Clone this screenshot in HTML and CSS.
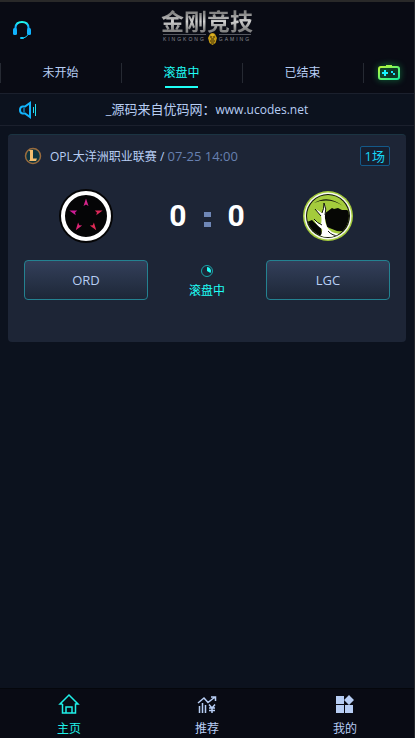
FILE: index.html
```
<!DOCTYPE html>
<html lang="zh-CN">
<head>
<meta charset="utf-8">
<meta name="viewport" content="width=device-width, initial-scale=1">
<title>金刚竞技</title>
<link rel="stylesheet" href="styles.css">
</head>
<body>
<div class="app">
  <header class="header">
    <a class="support" href="#" aria-label="客服">
      <svg width="20" height="20" viewBox="0 0 20 20" fill="none">
        <defs><linearGradient id="g-head" x1="0" y1="0" x2="0" y2="1"><stop offset="0" stop-color="#1ffff0"/><stop offset=".6" stop-color="#10b4ff"/></linearGradient></defs>
        <path d="M3.500 9V7.500Q4 2 10 2T16.500 7.500V9" stroke="url(#g-head)" stroke-width="2"/>
        <rect x="1" y="8" width="4" height="7" rx="1.500" fill="#10b4ff"/>
        <rect x="15" y="8" width="4" height="7" rx="1.500" fill="#10b4ff"/>
        <path d="M16 14.500Q15 17 11.500 18" stroke="#12c8f8"/>
        <rect x="8" y="17" width="4" height="2" rx="1" fill="#12c8f8"/>
      </svg>
    </a>
    <h1 class="logo">
      <span class="logo-name">金刚竞技</span>
      <span class="logo-sub">
        <span class="logo-word">KINGKONG</span>
        <svg width="9" height="12" viewBox="0 0 9 12"><path d="M2 1Q4.500-1 7 1L9 5 7.500 10 4.500 12 1.500 10 0 5Z" fill="#c49a14"/><path d="M2 4h2M5 4h2M3 6h3M2 8h5M3 10h3" stroke="#3b2b08"/><path d="M3 2h3" stroke="#f0c937"/></svg>
        <span class="logo-word">GAMING</span>
      </span>
    </h1>
  </header>

  <nav class="tabs">
    <a class="tab" href="#">未开始</a>
    <a class="tab active" href="#">滚盘中</a>
    <a class="tab" href="#">已结束</a>
    <a class="tab games" href="#" aria-label="游戏">
      <svg width="24" height="18" viewBox="0 0 24 18" fill="none">
        <defs><linearGradient id="g-pad" x1="0" y1="0" x2="1" y2="1"><stop offset="0" stop-color="#b8f83c"/><stop offset="1" stop-color="#16f09c"/></linearGradient></defs>
        <rect x="2" y="3" width="20" height="12" rx="2" stroke="url(#g-pad)" stroke-width="2"/>
        <path d="M9 2h6" stroke="#9cf64a" stroke-width="2"/>
        <path d="M5 9h6M8 6v6" stroke="#18f4ff" stroke-width="2"/>
        <path d="M14 7h2v2h-2zM16 9h2v2h-2z" fill="#18e4f4"/>
      </svg>
    </a>
  </nav>

  <div class="notice">
    <svg width="18" height="18" viewBox="0 0 18 18" fill="none">
      <path d="M12 2v14L7 12.500H4.500Q2 12 2 9T4.500 5.500H7Z" stroke="#12b4fc" stroke-width="2"/>
      <path d="M6 7v4" stroke="#12b4fc"/>
      <path d="M15.500 6v6M17.500 3v12" stroke="#22dff5"/>
    </svg>
    <p class="notice-text">_源码来自优码网：<span class="url">www.ucodes.net</span></p>
  </div>

  <main class="content">
    <article class="match">
      <div class="match-head">
        <svg width="18" height="18" viewBox="0 0 18 18"><circle cx="9" cy="9" r="7.500" fill="#0d3440" stroke="#9a6b3d" stroke-width="1.500"/><path d="M5 3h4v8.500h4l-1 2.500H5l1-1.500V4.500Z" fill="#f2bd70"/></svg>
        <p class="league">OPL大洋洲职业联赛 / <time>07-25 14:00</time></p>
        <span class="badge">1场</span>
      </div>
      <div class="teams">
        <svg class="crest" width="54" height="54" viewBox="0 0 54 54">
          <circle cx="27" cy="27" r="27" fill="#050506"/>
          <circle cx="27" cy="27" r="23" stroke="#fff" stroke-width="4"/>
          <defs><path id="dart" d="M27 9.500L29.500 17 27 15.500 24.500 17Z"/></defs>
          <use href="#dart" fill="#d6248a"/>
          <use href="#dart" fill="#dc2858" transform="rotate(72 27 27)"/>
          <use href="#dart" fill="#e02a55" transform="rotate(144 27 27)"/>
          <use href="#dart" fill="#dc2474" transform="rotate(216 27 27)"/>
          <use href="#dart" fill="#d01c96" transform="rotate(288 27 27)"/>
        </svg>
        <div class="score"><span>0</span><span class="colon"></span><span>0</span></div>
        <svg class="crest" width="54" height="54" viewBox="0 0 54 54">
          <defs><clipPath id="crest-in"><circle cx="27" cy="27" r="21"/></clipPath></defs>
          <circle cx="27" cy="27" r="25" fill="#a4cb3c"/>
          <circle cx="27" cy="27" r="23.500" fill="#f7faee"/>
          <circle cx="27" cy="27" r="22" fill="#10150a"/>
          <g clip-path="url(#crest-in)">
            <path d="M5 5h44v44H5Z" fill="#a4cb3c"/>
            <path d="M13 14Q27 5 42 17Q28 8 13 14Z" fill="#10150a"/>
            <path d="M23 25l4-3 4-3 2 1 4-1 4 2h5l4 3v14Q44 43 36 42L26 38Z" fill="#060705"/>
            <path d="M6 33l5-2 3 3 6 5 1 6-5 5L5 44Z" fill="#060705"/>
            <path d="M17 50Q22 45 21 40Q16 37 13 31Q18 35 20 35Q21 30 20 27L14 20Q18 22 21 24Q23 20 23 14Q26 20 24 26Q23 38 31 43Q39 47 47 42L44 52H17Z" fill="#fff"/>
            <path d="M20 27L14 20M21 24Q23 20 23 14Q26 20 24 26M21 36Q16 34 13 30" fill="none" stroke="#10150a"/>
            <path d="M27 42Q31 47 39 47" fill="none" stroke="#10150a"/>
          </g>
        </svg>
      </div>
      <div class="odds">
        <button class="team" type="button">ORD</button>
        <div class="status">
          <svg width="14" height="14" viewBox="0 0 14 14" fill="none"><circle cx="7" cy="7" r="5.500" stroke="#1aa3a8"/><path d="M7 3a4 4 0 0 1 3.500 6L7 7Z" fill="#1ffff6"/></svg>
          <span>滚盘中</span>
        </div>
        <button class="team" type="button">LGC</button>
      </div>
    </article>
  </main>

  <nav class="bottom">
    <a class="item current" href="#">
      <svg width="22" height="22" viewBox="0 0 22 22" fill="none" stroke="currentColor" stroke-width="1.500"><path d="M4.500 11H2L11 2l9 9h-2.500v9h-13V11M8 20v-6h6v6"/></svg>
      <span>主页</span>
    </a>
    <a class="item" href="#">
      <svg width="22" height="22" viewBox="0 0 22 22" fill="none" stroke="currentColor" stroke-width="1.500"><path d="M2 10l6-5 4 4.500 7-5.500M15 4h4.500v4M3.500 13v7M6.500 10v10M9.500 12v8M13 11.500l3 3.500 3-3.500M16 15v5M13 15h6M13 17.500h6"/></svg>
      <span>推荐</span>
    </a>
    <a class="item" href="#">
      <svg width="22" height="22" viewBox="0 0 22 22" fill="currentColor"><path d="M2 3h8v8H2zM2 12h8v8H2zM11 12h8v8h-8zM15 2l5 5-5 5-5-5z"/></svg>
      <span>我的</span>
    </a>
  </nav>
</div>
</body>
</html>
```
FILE: styles.css
```
* {
  box-sizing: border-box;
}

body {
  margin: 0;
  background: #0c121e;
  color: #b8cef4;
  font: 13px/18px "Open Sans", "Noto Sans CJK SC", sans-serif;
}

h1,
p {
  margin: 0;
}

a {
  color: inherit;
  text-decoration: none;
}

svg {
  display: block;
  flex: none;
}

.app {
  display: flex;
  flex-direction: column;
  min-height: 100vh;
  border-top: 2px solid #292929;
  border-right: 1px solid #26282d;
}

.header {
  display: grid;
  grid-template-columns: 1fr auto 1fr;
  align-items: center;
  height: 50px;
  padding: 0 12px;
  background: #090b14;
}

.support {
  padding-top: 6px;
}

.logo {
  display: flex;
  flex-direction: column;
  align-items: center;
}

.logo-name {
  font-size: 23px;
  line-height: 23px;
  font-weight: 700;
  background: linear-gradient(#858585 15%, #cfcfcf 50%, #858585 85%);
  background-clip: text;
  color: transparent;
}

.logo-sub {
  display: flex;
  align-items: center;
  gap: 2px;
}

.logo-word {
  border-top: 1px solid #555860;
  color: #8c8e94;
  font: 5px/8px "Liberation Sans", sans-serif;
  letter-spacing: 2px;
  white-space: nowrap;
}

.tabs {
  display: grid;
  grid-template-columns: 121fr 121fr 121fr 51fr;
  height: 42px;
  background: #090b14;
  border-bottom: 1px solid #1b202d;
}

.tab {
  position: relative;
  display: flex;
  align-items: center;
  justify-content: center;
  font-size: 12px;
}

.tab::before {
  content: "";
  position: absolute;
  left: 0;
  top: 11px;
  height: 20px;
  border-left: 1px solid #262a33;
}

.active {
  color: #1ffff6;
}

.active::after {
  content: "";
  position: absolute;
  bottom: 5px;
  width: 33px;
  height: 2px;
  background: #1ffff6;
}

.games svg {
  filter: drop-shadow(0 0 3px #16a050);
}

.notice {
  display: flex;
  align-items: center;
  height: 32px;
  padding: 0 18px;
  border-bottom: 1px solid #1b202d;
}

.notice-text {
  flex: 1;
  padding-right: 18px;
  text-align: center;
}

.url {
  font-size: 12px;
}

.content {
  flex: 1;
  padding: 8px;
}

.match {
  padding: 11px 16px 42px;
  border-top: 1px solid #1b3442;
  border-radius: 4px;
  background: #1d2536;
}

.match-head {
  display: flex;
  align-items: center;
  gap: 8px;
}

.league {
  flex: 1;
  font-size: 12px;
}

.league time {
  color: #6780b0;
  font-size: 13px;
}

.badge {
  padding: 0 4px;
  border: 1px solid #145989;
  border-radius: 2px;
  background: #171f30;
  color: #16d6f6;
}

.teams {
  display: grid;
  grid-template-columns: 124px 1fr 124px;
  align-items: center;
  justify-items: center;
  padding: 23px 0 17px;
}

.crest {
  fill: none;
}

.score {
  display: flex;
  align-items: center;
  justify-content: center;
  gap: 17px;
  color: #fff;
  font: 700 30px/36px Roboto, sans-serif;
}

.colon {
  width: 7px;
  height: 15px;
  margin-top: 6px;
  border: solid #6f87b7;
  border-width: 5px 0;
}

.odds {
  display: grid;
  grid-template-columns: 124px 1fr 124px;
  align-items: center;
}

.team {
  height: 40px;
  border: 1px solid #248291;
  border-radius: 4px;
  background: linear-gradient(#333f5a, #1d2737);
  color: inherit;
  font: inherit;
}

.status {
  display: flex;
  flex-direction: column;
  align-items: center;
  gap: 4px;
  padding-top: 4px;
  color: #1ffff6;
  font-size: 12px;
}

.bottom {
  display: grid;
  grid-template-columns: repeat(3, 1fr);
  height: 50px;
  background: #090b14;
  border-top: 1px solid #05070c;
}

.item {
  display: flex;
  flex-direction: column;
  align-items: center;
  gap: 5px;
  padding-top: 4px;
  font-size: 12px;
}

.current {
  color: #1ff0e8;
}
```
